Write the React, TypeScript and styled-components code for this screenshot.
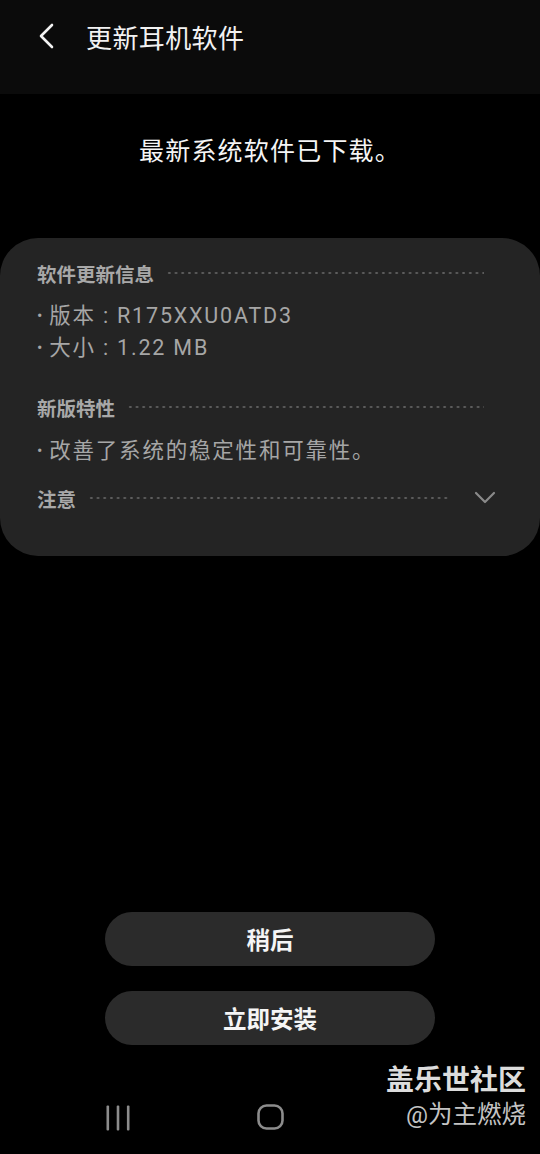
import React from 'react';
import styled, { createGlobalStyle } from 'styled-components';

const GlobalStyle = createGlobalStyle`
  html, body {
    margin: 0;
    padding: 0;
    background: #000;
  }
  body {
    font-family: Roboto, "Noto Sans CJK SC", sans-serif;
  }
`;

const Screen = styled.div`
  position: relative;
  display: flex;
  flex-direction: column;
  width: 540px;
  height: 1154px;
  background: #000;
  overflow: hidden;
`;

const Header = styled.div`
  height: 94px;
  background: #0b0b0b;
  box-sizing: border-box;
`;

const HeaderRow = styled.div`
  display: flex;
  align-items: center;
  height: 72px;
  padding-left: 38px;
`;

const BackButton = styled.div`
  display: flex;
  width: 48px;
`;

const Title = styled.h1`
  margin: 0;
  font-size: 26px;
  font-weight: 400;
  color: #f2f2f2;
  letter-spacing: 0.4px;
`;

const Message = styled.p`
  margin: 41px 0 0;
  text-align: center;
  font-size: 25px;
  line-height: 34px;
  letter-spacing: 1.2px;
  color: #f5f5f5;
`;

const Card = styled.section`
  margin-top: 69px;
  background: #242424;
  border-radius: 38px;
  padding: 21px 56px 44px 37px;
`;

const SectionRow = styled.div<{ $gap: number }>`
  display: flex;
  align-items: center;
  height: 28px;
  margin-top: ${(p) => p.$gap}px;
`;

const SectionTitle = styled.span`
  font-size: 19.5px;
  font-weight: 700;
  color: #a8a8a8;
  white-space: nowrap;
`;

const Leader = styled.span<{ $end?: number }>`
  flex: 1;
  height: 4px;
  margin-left: 12px;
  margin-right: ${(p) => p.$end ?? 0}px;
  background-image: radial-gradient(circle, #5e5e5e 1px, transparent 1.3px);
  background-size: 6.7px 4px;
  background-repeat: repeat-x;
`;

const List = styled.ul<{ $gap: number }>`
  list-style: none;
  margin: ${(p) => p.$gap}px 0 0;
  padding: 0;
`;

const Item = styled.li`
  height: 32px;
  font-size: 21.5px;
  line-height: 32px;
  letter-spacing: 1.8px;
  color: #a6a6a6;
  white-space: nowrap;

  &::before {
    content: '•';
    margin-right: 5px;
    font-size: 16px;
    position: relative;
    top: -2px;
  }
`;

const Chevron = styled.div`
  display: flex;
  margin-right: -12px;
`;

const Spacer = styled.div`
  flex: 1;
`;

const Actions = styled.div`
  display: flex;
  flex-direction: column;
  align-items: center;
  gap: 25px;
`;

const ActionButton = styled.button`
  width: 330px;
  height: 54px;
  border: none;
  border-radius: 27px;
  background: #2b2b2b;
  color: #f5f5f5;
  font-family: Roboto, "Noto Sans CJK SC", sans-serif;
  font-size: 23.5px;
  font-weight: 700;
`;

const NavBar = styled.nav`
  display: flex;
  align-items: center;
  height: 55px;
  margin: 45px 0 9px;
  padding-left: 106px;
  gap: 127px;
`;

const Watermark = styled.div`
  position: absolute;
  right: 14px;
  bottom: 22px;
  display: flex;
  flex-direction: column;
  align-items: flex-end;
  color: #d8d8d8;
  text-shadow: 0 0 2px rgba(0, 0, 0, 0.6);
`;

const WatermarkTitle = styled.span`
  font-size: 28px;
  font-weight: 700;
  line-height: 34px;
  color: #dcdcdc;
`;

const WatermarkUser = styled.span`
  font-size: 24.5px;
  line-height: 34px;
  color: #c4c4c4;
`;

const App = () => (
  <Screen>
    <GlobalStyle />
    <Header>
      <HeaderRow>
        <BackButton>
          <svg width="18" height="26" viewBox="0 0 18 26">
            <polyline points="14,2 3,13 14,24" fill="none" stroke="#f2f2f2" strokeWidth="2.6" strokeLinecap="round" strokeLinejoin="round" />
          </svg>
        </BackButton>
        <Title>更新耳机软件</Title>
      </HeaderRow>
    </Header>

    <Message>最新系统软件已下载。</Message>

    <Card>
      <SectionRow $gap={0}>
        <SectionTitle>软件更新信息</SectionTitle>
        <Leader />
      </SectionRow>
      <List $gap={13}>
        <Item>版本 : R175XXU0ATD3</Item>
        <Item>大小 : 1.22 MB</Item>
      </List>

      <SectionRow $gap={29}>
        <SectionTitle>新版特性</SectionTitle>
        <Leader />
      </SectionRow>
      <List $gap={14}>
        <Item>改善了系统的稳定性和可靠性。</Item>
      </List>

      <SectionRow $gap={17}>
        <SectionTitle>注意</SectionTitle>
        <Leader $end={24} />
        <Chevron>
          <svg width="22" height="14" viewBox="0 0 22 14">
            <polyline points="2,2 11,11 20,2" fill="none" stroke="#8a8a8a" strokeWidth="2.2" strokeLinecap="round" strokeLinejoin="round" />
          </svg>
        </Chevron>
      </SectionRow>
    </Card>

    <Spacer />

    <Actions>
      <ActionButton>稍后</ActionButton>
      <ActionButton>立即安装</ActionButton>
    </Actions>

    <NavBar>
      <svg width="24" height="26" viewBox="0 0 24 26">
        <rect x="0.5" y="0.5" width="2.6" height="25" rx="1" fill="#8c8c8c" />
        <rect x="10.7" y="0.5" width="2.6" height="25" rx="1" fill="#8c8c8c" />
        <rect x="20.9" y="0.5" width="2.6" height="25" rx="1" fill="#8c8c8c" />
      </svg>
      <svg width="28" height="27" viewBox="0 0 28 27">
        <rect x="1.5" y="1.5" width="24" height="23" rx="8" fill="none" stroke="#8c8c8c" strokeWidth="2.6" />
      </svg>
    </NavBar>

    <Watermark>
      <WatermarkTitle>盖乐世社区</WatermarkTitle>
      <WatermarkUser>@为主燃烧</WatermarkUser>
    </Watermark>
  </Screen>
);

export default App;
